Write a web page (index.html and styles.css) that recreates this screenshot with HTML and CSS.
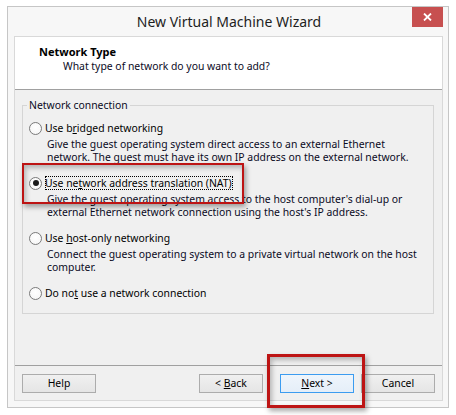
FILE: index.html
```html
<!DOCTYPE html>
<html>
<head>
<meta charset="utf-8">
<title>New Virtual Machine Wizard</title>
<link rel="stylesheet" href="styles.css">
</head>
<body>
<div class="window">
  <div class="titlebar">
    <span class="title">New Virtual Machine Wizard</span>
    <div class="close">
      <svg width="9" height="8" viewBox="0 0 9 8"><path d="M1 0.5 L8 7.5 M8 0.5 L1 7.5" stroke="#fff" stroke-width="1.8" fill="none"/></svg>
    </div>
  </div>
  <div class="client">
    <div class="header">
      <div class="h-title">Network Type</div>
      <div class="h-sub">What type of network do you want to add?</div>
    </div>
    <div class="content">
      <fieldset class="group">
        <legend>Network connection</legend>
        <div class="opt">
          <div class="opt-label"><span class="radio"></span><span>Use b<u>r</u>idged networking</span></div>
          <div class="opt-desc">Give the guest operating system direct access to an external Ethernet<br>network. The guest must have its own IP address on the external network.</div>
        </div>
        <div class="opt">
          <div class="opt-label"><span class="radio checked"></span><span class="focus">Use ne<u>t</u>work address translation (NAT)</span></div>
          <div class="opt-desc">Give the guest operating system access to the host computer's dial-up or<br>external Ethernet network connection using the host's IP address.</div>
        </div>
        <div class="opt">
          <div class="opt-label"><span class="radio"></span><span>Use <u>h</u>ost-only networking</span></div>
          <div class="opt-desc">Connect the guest operating system to a private virtual network on the host<br>computer.</div>
        </div>
        <div class="opt last">
          <div class="opt-label"><span class="radio"></span><span>Do no<u>t</u> use a network connection</span></div>
        </div>
      </fieldset>
    </div>
    <div class="footer">
      <div class="btn btn-help"><span>Help</span></div>
      <div class="btn btn-back"><span>&lt; <u>B</u>ack</span></div>
      <div class="btn btn-next default"><span><u>N</u>ext &gt;</span></div>
      <div class="btn btn-cancel"><span>Cancel</span></div>
    </div>
  </div>
</div>
<div class="callout callout-nat"></div>
<div class="callout callout-next"></div>
</body>
</html>
```
FILE: styles.css
```css
html, body {
  margin: 0;
  padding: 0;
  background: #ffffff;
}
body {
  font-family: "Noto Sans", "Open Sans", sans-serif;
  font-size: 10.4px;
  color: #000;
  position: relative;
  width: 456px;
  height: 415px;
  overflow: hidden;
}
.window {
  position: relative;
  box-sizing: border-box;
  margin: 6px 0 0 7px;
  width: 442px;
  height: 402px;
  border: 1px solid #c6c6c6;
  background: #f7f7f7;
  padding: 0 5px 6px 6px;
  display: flex;
  flex-direction: column;
}
.titlebar {
  height: 29px;
  display: flex;
  align-items: center;
  justify-content: center;
}
.title {
  font-size: 14px;
  color: #1e1e1e;
  line-height: 29px;
  padding-left: 1px;
}
.close {
  position: absolute;
  top: 0;
  right: 5px;
  width: 31px;
  height: 20px;
  background: #c75050;
  display: flex;
  align-items: center;
  justify-content: center;
}
.close svg { display: block; }
.client {
  flex: 1;
  box-sizing: border-box;
  border: 1px solid #d9d9d9;
  display: flex;
  flex-direction: column;
  background: #f0f0f0;
}
.header {
  box-sizing: border-box;
  background: #ffffff;
  border-bottom: 1px solid #a0a0a0;
  padding: 7px 0 0 24px;
  height: 53px;
}
.h-title {
  font-weight: bold;
  font-size: 11px;
  line-height: 15px;
}
.h-sub {
  line-height: 15px;
  padding-left: 24px;
  color: #0a0a1e;
}
.content {
  flex: 1;
  padding-top: 8px;
}
.group {
  margin: 0 8px 0 7px;
  padding: 8px 6px 12px 6px;
  border: 1px solid #d5d5d5;
  min-width: 0;
}
.group legend {
  padding: 0 2px;
  margin-left: -2px;
  line-height: 14px;
  color: #0a0a1e;
}
.opt {
  margin-bottom: 11px;
}
.opt.last { margin-bottom: 0; }
.opt-label {
  display: flex;
  align-items: center;
  height: 16px;
  line-height: 16px;
  white-space: nowrap;
}
.radio {
  box-sizing: border-box;
  width: 13px;
  height: 13px;
  border-radius: 50%;
  border: 1px solid #7a7a7a;
  background: radial-gradient(circle at 50% 40%, #ffffff 0%, #f4f4f4 100%);
  margin-right: 3px;
  flex: none;
  display: flex;
  align-items: center;
  justify-content: center;
}
.radio.checked::after {
  content: "";
  width: 6px;
  height: 6px;
  border-radius: 50%;
  background: #1a1a1a;
}
.focus {
  outline: 1px dotted #000;
  outline-offset: -1px;
  line-height: 14px;
  padding: 0 1px 0 0;
}
.opt-desc {
  margin: 2px 0 0 18px;
  line-height: 13px;
  white-space: nowrap;
  color: #0a0a1e;
}
.footer {
  height: 35px;
  box-sizing: border-box;
  border-top: 1px solid #a0a0a0;
  display: flex;
  align-items: flex-start;
  padding: 8px 7px 0 7px;
}
.btn {
  box-sizing: border-box;
  height: 19px;
  width: 74px;
  border: 1px solid #acacac;
  background: linear-gradient(#f0f0f0, #e5e5e5);
  display: flex;
  align-items: center;
  justify-content: center;
  line-height: 17px;
  white-space: pre;
}
.btn-help { margin-right: auto; }
.btn-back { width: 64px; }
.btn-next { margin-left: 17px; }
.btn-cancel { margin-left: 7px; }
.btn.default {
  border-color: #3c9cf0;
  background: linear-gradient(#eef5fc, #e5eef8);
}
.callout {
  position: absolute;
  box-sizing: border-box;
  border: 2px solid #bd1414;
  box-shadow: 2px 3px 5px rgba(0,0,0,0.35), inset 2px 3px 5px rgba(0,0,0,0.25);
}
.callout-nat {
  left: 22px;
  top: 163px;
  width: 222px;
  height: 41px;
}
.callout-next {
  left: 267px;
  top: 354px;
  width: 98px;
  height: 54px;
  border-width: 3px;
}
```
